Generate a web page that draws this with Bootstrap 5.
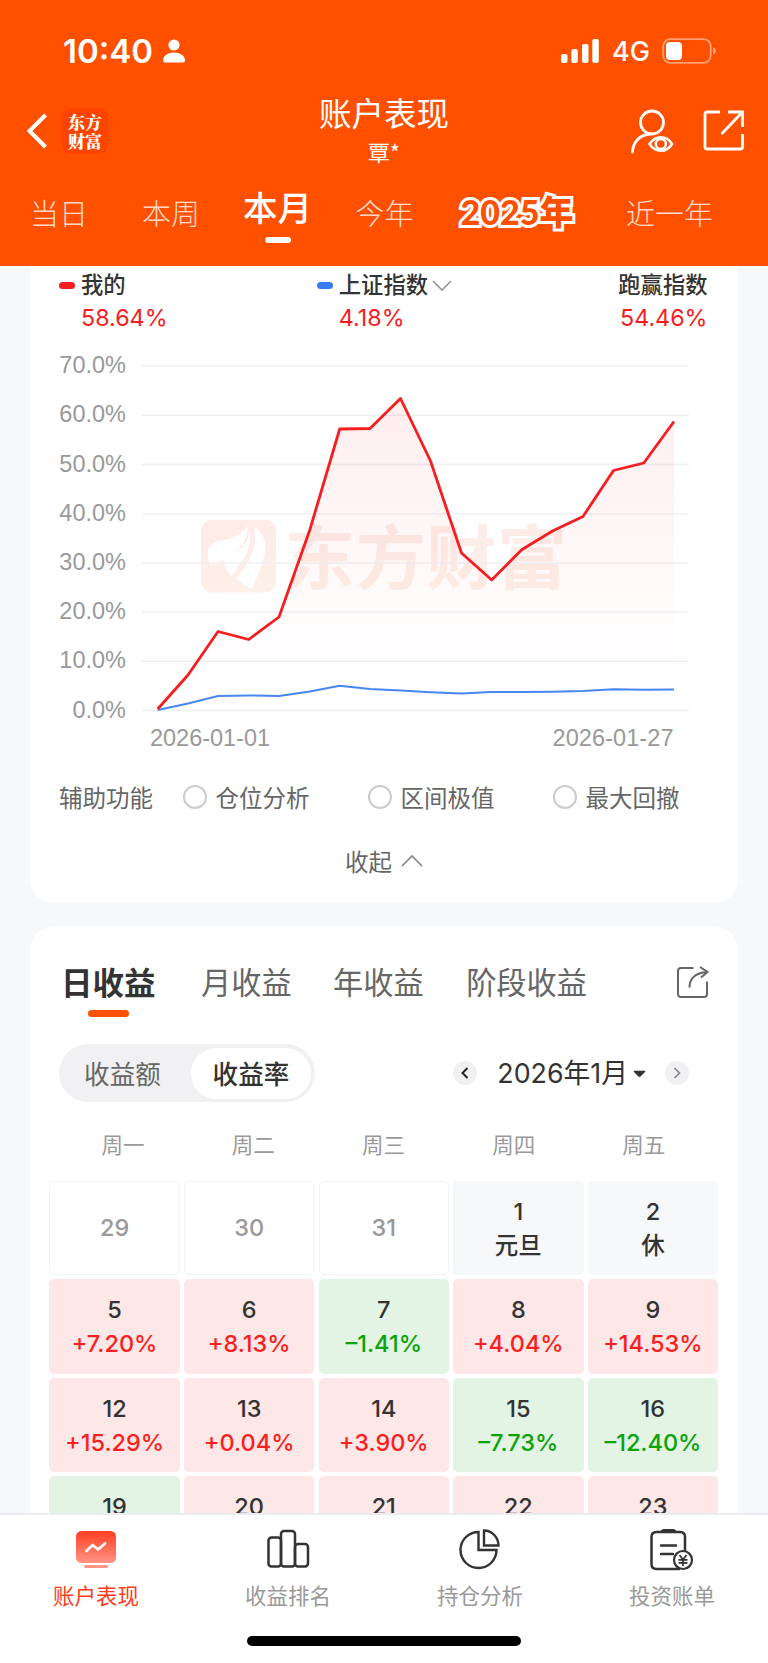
<!DOCTYPE html>
<html lang="zh-CN">
<head>
<meta charset="utf-8">
<meta name="viewport" content="width=device-width, initial-scale=1">
<title>账户表现</title>
<link href="https://cdn.jsdelivr.net/npm/bootstrap@5.3.0/dist/css/bootstrap.min.css" rel="stylesheet">
<style>
  body{font-family:"Noto Sans CJK SC",sans-serif;background:#f7f8fa;color:#333;width:768px;height:1663px;overflow:hidden}
  svg{display:block;flex:none}
  .num{font-family:Inter,"Noto Sans CJK SC",sans-serif}
  .app-head{background:#ff5000;height:266px;color:#fff}
  .status-row{height:100px;padding:2px 51px 0 63px}
  .clock{font-size:33px;font-weight:600;line-height:40px}
  .carrier{font-size:27px;line-height:36px;font-weight:500}
  .title-row{height:80px;padding:0 23px 0 26px}
  .side-box{width:140px;height:62px}
  .title-box{margin:-4px 3px 0 0}
  .page-title{font-size:32.5px;line-height:32px;font-weight:400;height:32px}
  .page-sub{font-size:22px;line-height:22px;margin-top:12px}
  .brand-tile{width:46px;height:46px;border-radius:9px;background:#ff4400;font-size:17px;line-height:19.5px;font-weight:900;font-family:"Noto Serif CJK SC","Noto Sans CJK SC",serif}
  .period-tabs{display:grid;grid-template-columns:114px 110px 104px 109px 156px 149px;padding-left:2px;height:86px;text-align:center;font-size:29px;line-height:64px}
  .period-tabs span{color:rgba(255,255,255,.8);font-weight:300}
  .period-tabs .on{color:#fff;font-weight:500;font-size:34.5px;line-height:52px;margin-left:-1px}
  .period-tabs .on::after{content:"";display:block;width:26px;height:6px;border-radius:3px;background:#fff;margin:5px auto 0}
  .period-tabs .promo{color:#ff5000;font-weight:900;font-size:34px;font-family:Lato,"Noto Sans CJK SC",sans-serif;-webkit-text-stroke:6px #fff;paint-order:stroke fill;stroke-linejoin:round}
  .panel{width:708px;margin:0 auto;background:#fff}
  .panel-chart{height:636.5px;border-radius:0 0 24px 24px}
  .panel-cal{margin-top:23.5px;height:700px;border-radius:24px 24px 0 0}
  .legend-row{padding:5px 30.5px 0 29px;height:68px;font-size:22.3px;line-height:25px}
  .legend-row .num{font-size:23.3px;line-height:28px;margin-top:7.5px;color:#f61d21;font-weight:400}
  .dash{width:16px;height:7px;border-radius:3.5px;margin:10.5px 6px 0 0}
  .aux-row{height:36px;margin-top:14px;padding-left:29px;font-size:23.5px;line-height:36px;color:#666}
  .aux-row .cell{width:185px;gap:8.5px}
  .ring{width:24px;height:24px;border-radius:50%;border:2px solid #ccc}
  .fold-row{height:36px;margin-top:28px;font-size:23.5px;line-height:36px;color:#666}
  .cal-tabs{height:92px;padding:35px 29px 0 31px;font-size:30.2px;line-height:40px;color:#666}
  .cal-tabs .on{font-size:31.5px;font-weight:700;color:#333}
  .cal-tabs .on::after{content:"";display:block;width:41px;height:7px;border-radius:3.5px;background:#ff5000;margin:9px auto 0}
  .switch{width:256px;height:58px;border-radius:29px;background:#f1f1f4;padding:3.5px 4px;font-size:25.6px;line-height:49px;color:#666}
  .switch div{flex:none;width:120px;border-radius:26px;text-align:center}
  .switch .off{width:128px;padding-right:9px}
  .switch .on{background:#fff;color:#333;font-weight:500}
  .month-pick{font-size:26.8px;line-height:40px;color:#333}
  .arrow-dot{width:24px;height:24px;border-radius:50%;background:#f1f1f4}
  .week-row{display:grid;grid-template-columns:repeat(5,130.2px);padding-left:28px;height:32px;margin-top:26px;text-align:center;font-size:21.5px;line-height:32px;color:#999}
  .days{display:grid;grid-template-columns:repeat(5,130.4px);grid-auto-rows:94.4px;gap:4.1px 4.2px;padding-left:19.4px;margin-top:21px;text-align:center;font-size:23.5px;font-weight:500}
  .days>div{border-radius:5px;line-height:34px;padding-top:14px}
  .days .out{border:1px solid #f2f3f5;color:#999;line-height:92px;padding:0}
  .days .rest{background:#f7f8fa}
  .days .up{background:#fde7e7}
  .days .down{background:#e3f4e4}
  .up b,.down b{display:block;font-weight:500}
  .up b{color:#fb1f22}.down b{color:#0aa30a}
  .app-foot{height:150px;background:#fff;border-top:2px solid #ebecef;font-size:21.5px;line-height:30px;color:#999}
  .app-foot .tabs{padding:13px 0 0}
  .app-foot .item{width:192px}
  .app-foot .item svg{margin-bottom:8px}
  .home-bar{width:274px;height:10px;border-radius:5px;background:#000;margin:26px auto 0}
</style>
</head>
<body class="d-flex flex-column">

<header class="app-head flex-shrink-0">
  <div class="status-row d-flex align-items-center num">
    <span class="clock">10:40</span>
    <svg width="26" height="26" viewBox="0 0 26 26" fill="#fff" style="margin:-1px 0 0 7px"><circle cx="14" cy="7" r="5.6"/><path d="M3 22.3C3 17.800 8 14.500 14 14.500S25 17.800 25 22.300Q25 24.500 23 24.500H5Q3 24.500 3 22.300Z"/></svg>
    <svg class="ms-auto" width="40" height="26" viewBox="0 0 40 26" fill="#fff"><rect x="1" y="16" width="6.500" height="9" rx="2"/><rect x="11.300" y="11" width="6.500" height="14" rx="2"/><rect x="22" y="6" width="6.500" height="19" rx="2"/><rect x="32.300" y="1" width="6.500" height="24" rx="2"/></svg>
    <span class="carrier" style="margin:2px 12px 0 12px">4G</span>
    <svg width="55" height="26" viewBox="0 0 55 26"><rect x="1.200" y="1.200" width="47.500" height="23.600" rx="7" fill="none" stroke="#fff" stroke-opacity=".45" stroke-width="1.800"/><rect x="4" y="4" width="16" height="18" rx="4" fill="#fff"/><path d="M51 9Q54 10.500 54 13T51 17Z" fill="#fff" fill-opacity=".5"/></svg>
  </div>
  <div class="title-row d-flex justify-content-between">
    <div class="side-box d-flex align-items-center">
      <svg width="24" height="38" viewBox="0 0 24 38" fill="none" stroke="#fff" stroke-width="4"><path d="M19.500 3 3.500 19 19.500 35"/></svg>
      <div class="brand-tile text-center d-flex flex-column justify-content-center" style="margin-left:12px"><span>东方</span><span>财富</span></div>
    </div>
    <div class="title-box text-center">
      <h1 class="page-title m-0">账户表现</h1>
      <div class="page-sub">覃*</div>
    </div>
    <div class="side-box d-flex align-items-center justify-content-end">
      <svg width="44" height="46" viewBox="0 0 44 46" fill="none" stroke="#fff" stroke-width="2.800" stroke-linecap="round" style="margin-top:-1px"><circle cx="22" cy="14.500" r="11.500"/><path d="M2.500 44C3 34 9.500 26.500 20.500 26"/><path d="M19.500 36C25.500 27 36.500 27 42 36C36.500 45 25.500 45 19.500 36Z" stroke-width="2.500"/><circle cx="30.800" cy="36" r="5" stroke-width="2.500"/></svg>
      <svg width="42" height="42" viewBox="0 0 42 42" fill="none" stroke="#fff" stroke-width="2.800" style="margin:-1px 0 0 29px"><path d="M17 2H4Q2 2 2 4V37Q2 39 4 39H37.500Q39.500 39 39.500 37V24M25 2H39.500V17M39 2.500 18.500 24"/></svg>
    </div>
  </div>
  <nav class="period-tabs">
    <span>当日</span><span>本周</span><span class="on">本月</span><span>今年</span><span class="promo">2025年</span><span>近一年</span>
  </nav>
</header>

<main class="flex-grow-1 overflow-hidden" style="min-height:0">
  <section class="panel panel-chart">
    <div class="legend-row d-flex justify-content-between fw-medium">
      <div class="d-flex"><i class="dash" style="background:#f61d21"></i><div>我的<div class="num">58.64%</div></div></div>
      <div class="d-flex" style="margin-right:17px"><i class="dash" style="background:#377cf0"></i><div><div class="d-flex">上证指数<svg width="20" height="14" viewBox="0 0 20 14" fill="none" stroke="#999" stroke-width="1.700" style="margin:8px 0 0 4px"><path d="M1 2 10 11 19 2"/></svg></div><div class="num">4.18%</div></div></div>
      <div class="text-end">跑赢指数<div class="num">54.46%</div></div>
    </div>
    <svg width="708" height="431" viewBox="30 334 708 431" font-family="Liberation Sans, Arial, sans-serif" font-size="23.5" fill="#999">
      <defs><linearGradient id="area" x1="0" y1="398" x2="0" y2="710" gradientUnits="userSpaceOnUse"><stop offset="0" stop-color="#f61d21" stop-opacity=".075"/><stop offset=".75" stop-color="#f61d21" stop-opacity=".01"/><stop offset="1" stop-color="#f61d21" stop-opacity="0"/></linearGradient>
      <linearGradient id="mark" x1="0" y1="520" x2="0" y2="592" gradientUnits="userSpaceOnUse"><stop offset="0" stop-color="#fdebe8"/><stop offset="1" stop-color="#fdf0e7"/></linearGradient></defs>
      <rect x="201" y="520" width="75" height="72.500" rx="11" fill="url(#mark)"/>
      <path d="M208 551C209 544 215 541 225 540C236 537 244 532 247 526C250 540 240 549 226 558C221 561 214 565 210 565Q207 557 208 551Z" fill="#fff"/>
      <path d="M249 527C253 543 247 555 239 565L232 576C226 571 223 564 224 557C239 552 251 543 249 527Z" fill="#fff"/>
      <path d="M254 527C265 534 268 546 263 560C260 571 255 580 252 589C247 587 240 583 236 578C249 564 258 549 254 527Z" fill="#fff"/>
      <text x="285" y="584" font-family="Noto Sans CJK SC, sans-serif" font-weight="700" font-size="70" textLength="282" lengthAdjust="spacing" fill="url(#mark)">东方财富</text>
      <path d="M142 366H689M142 415.200H689M142 464.500H689M142 513.700H689M142 562.900H689M142 612.100H689M142 661.300H689M142 710.500H689" stroke="#eff0f3" stroke-width="1.500"/>
      <path d="M157.700 709 188 675 218 631.500 248.700 639.500 279 617 309.800 530 339.700 429 370 428.500 400.500 398.500 430.500 461 461.500 553 491.700 580 522 549.500 552.500 531 583 516.500 613.500 470.500 643.800 463 674 421.500V710H157Z" fill="url(#area)"/>
      <path d="M157.700 710 188 703.500 218 696 248.700 695.500 279 696 309.800 691.500 339.700 685.700 370 689 400.500 690.500 430.500 692.200 461.500 693.500 491.700 692 522 692 552.500 691.700 583 691 613.500 689.300 643.800 689.700 674 689.500" fill="none" stroke="#4787f0" stroke-width="2"/>
      <path d="M157.700 709 188 675 218 631.500 248.700 639.500 279 617 309.800 530 339.700 429 370 428.500 400.500 398.500 430.500 461 461.500 553 491.700 580 522 549.500 552.500 531 583 516.500 613.500 470.500 643.800 463 674 421.500" fill="none" stroke="#f61d21" stroke-width="2.800" stroke-linejoin="round"/>
      <g text-anchor="end"><text x="126" y="373">70.0%</text><text x="126" y="422.300">60.0%</text><text x="126" y="471.500">50.0%</text><text x="126" y="520.700">40.0%</text><text x="126" y="570">30.0%</text><text x="126" y="619">20.0%</text><text x="126" y="668.400">10.0%</text><text x="126" y="717.600">0.0%</text></g>
      <text x="150" y="746" textLength="120">2026-01-01</text><text x="552.500" y="746" textLength="121">2026-01-27</text>
    </svg>
    <div class="aux-row d-flex">
      <span style="width:124px">辅助功能</span>
      <div class="cell d-flex align-items-center"><i class="ring"></i>仓位分析</div>
      <div class="cell d-flex align-items-center"><i class="ring"></i>区间极值</div>
      <div class="cell d-flex align-items-center"><i class="ring"></i>最大回撤</div>
    </div>
    <div class="fold-row d-flex justify-content-center align-items-center"><span>收起</span><svg width="22" height="14" viewBox="0 0 22 14" fill="none" stroke="#888" stroke-width="1.700" style="margin:0 0 0 9px"><path d="M1 12 11 2 21 12"/></svg></div>
  </section>

  <section class="panel panel-cal">
    <div class="cal-tabs d-flex">
      <div class="on">日收益</div>
      <div style="margin-left:45.500px">月收益</div>
      <div style="margin-left:41.500px">年收益</div>
      <div style="margin-left:42.500px">阶段收益</div>
      <svg class="ms-auto" width="33" height="33" viewBox="0 0 33 33" fill="none" stroke="#666" stroke-width="2" style="margin-top:5px"><path d="M17.500 2H5Q2 2 2 5V28Q2 31 5 31H28Q31 31 31 28V15.500M13.500 21.500C13.500 13 19 7 31 6M24 1 31.500 6 25 11.500"/></svg>
    </div>
    <div class="d-flex align-items-center" style="padding:26px 49px 0 29px">
      <div class="switch d-flex"><div class="off">收益额</div><div class="on">收益率</div></div>
      <div class="arrow-dot d-flex align-items-center justify-content-center ms-auto"><svg width="8" height="12" viewBox="0 0 8 12" fill="none" stroke="#222" stroke-width="2"><path d="M6.500 1 1.500 6 6.500 11"/></svg></div>
      <div class="month-pick num d-flex align-items-center" style="margin:0 19px 0 20px">2026年1月<svg width="13" height="8" viewBox="0 0 13 8" fill="#333" style="margin:1px 0 0 5px"><path d="M1 .8H12Q12.800 1.200 12 2L7.500 6.500Q6.500 7.300 5.500 6.500L1 2Q.2 1.200 1 .8Z"/></svg></div>
      <div class="arrow-dot d-flex align-items-center justify-content-center"><svg width="8" height="12" viewBox="0 0 8 12" fill="none" stroke="#888" stroke-width="1.700"><path d="M1.500 1 6.500 6 1.500 11"/></svg></div>
    </div>
    <div class="week-row"><span>周一</span><span>周二</span><span>周三</span><span>周四</span><span>周五</span></div>
    <div class="days num">
      <div class="out">29</div><div class="out">30</div><div class="out">31</div><div class="rest">1<br>元旦</div><div class="rest">2<br>休</div>
      <div class="up">5<b>+7.20%</b></div><div class="up">6<b>+8.13%</b></div><div class="down">7<b>–1.41%</b></div><div class="up">8<b>+4.04%</b></div><div class="up">9<b>+14.53%</b></div>
      <div class="up">12<b>+15.29%</b></div><div class="up">13<b>+0.04%</b></div><div class="up">14<b>+3.90%</b></div><div class="down">15<b>–7.73%</b></div><div class="down">16<b>–12.40%</b></div>
      <div class="down">19</div><div class="up">20</div><div class="up">21</div><div class="up">22</div><div class="up">23</div>
    </div>
  </section>
</main>

<footer class="app-foot flex-shrink-0">
  <div class="tabs d-flex">
    <div class="item d-flex flex-column align-items-center" style="color:#ff3b20">
      <svg width="44" height="44" viewBox="0 0 44 44"><defs><linearGradient id="tile" x2="0" y2="1"><stop stop-color="#ff3e22"/><stop offset="1" stop-color="#ff9484"/></linearGradient></defs><rect x="2" y="3" width="40" height="32" rx="5.500" fill="url(#tile)"/><rect x="10" y="37" width="24" height="3" rx="1.500" fill="#ff9484"/><path d="M12.500 23 18.500 17 24 21.500 31 15.500" fill="none" stroke="#fff" stroke-width="2.800" stroke-linecap="round" stroke-linejoin="round"/></svg>账户表现</div>
    <div class="item d-flex flex-column align-items-center">
      <svg width="44" height="44" viewBox="0 0 44 44" fill="none" stroke="#333" stroke-width="2.500"><rect x="2.500" y="9.500" width="12.500" height="29" rx="3"/><rect x="15" y="3" width="14" height="35.500" rx="3"/><rect x="29" y="16" width="13" height="22.500" rx="3"/></svg>收益排名</div>
    <div class="item d-flex flex-column align-items-center">
      <svg width="44" height="44" viewBox="0 0 44 44" fill="none" stroke="#333" stroke-width="2.400"><path d="M20.500 4A18 18 0 1 0 38.500 22H20.500Z"/><path d="M26 2.500C34 2.500 40.500 9.500 40.500 17.500H26Z"/></svg>持仓分析</div>
    <div class="item d-flex flex-column align-items-center">
      <svg width="44" height="44" viewBox="0 0 44 44" fill="none" stroke="#333" stroke-width="2.500"><path d="M29 41H6.500Q1.500 41 1.500 36V9Q1.500 4 6.500 4H30Q35 4 35 9V24M11 17.500H26M11 26H23" stroke-linecap="round"/><path d="M11 4Q11 1.500 14 1.500H23Q26 1.500 26 4Z" fill="#333" stroke-width="1"/><circle cx="33" cy="32" r="9" fill="#fff" stroke-width="2.200"/><path d="M29.500 27 33 31.500 36.500 27M33 31.500V38M28.500 31.800H37.500M28.500 34.800H37.500" stroke-width="1.700"/></svg>投资账单</div>
  </div>
  <div class="home-bar"></div>
</footer>
<script src="https://cdn.jsdelivr.net/npm/bootstrap@5.3.0/dist/js/bootstrap.bundle.min.js"></script>
</body>
</html>
